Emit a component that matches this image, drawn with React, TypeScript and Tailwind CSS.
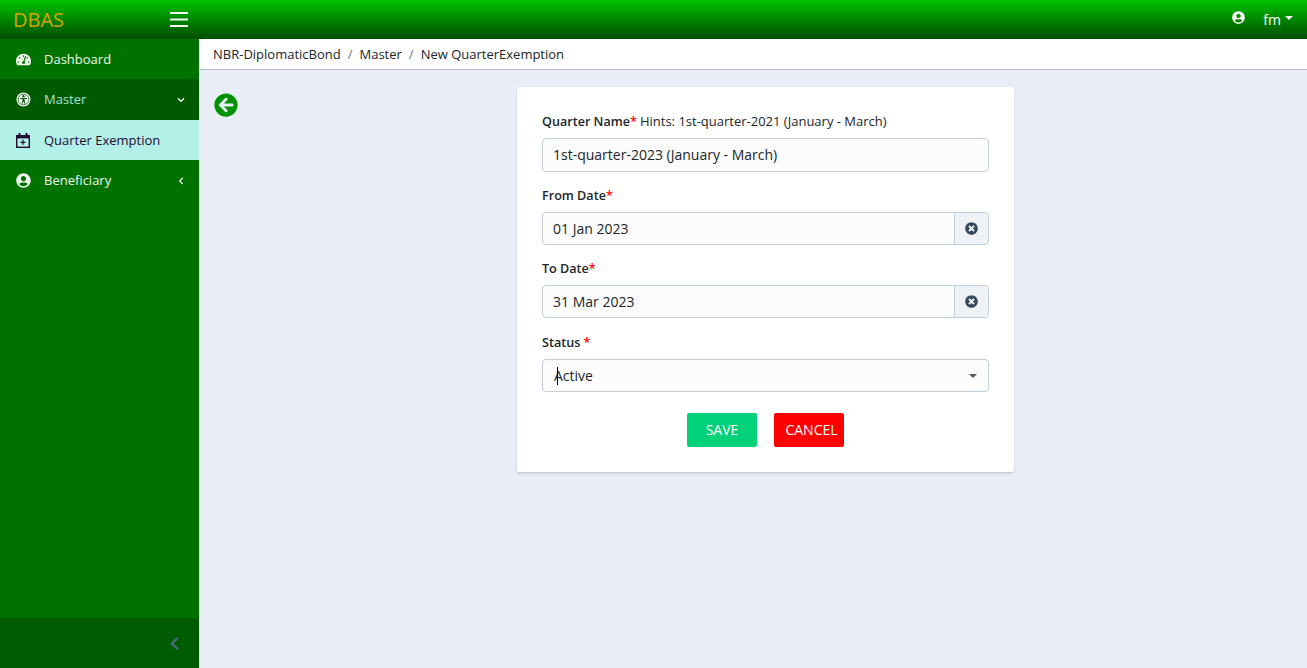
import { FaTachometerAlt, FaUserCircle, FaArrowCircleLeft, FaTimesCircle, FaChevronDown, FaChevronLeft } from "react-icons/fa";
import { ReactNode } from "react";

const font = { fontFamily: '"Open Sans", sans-serif' };

function AccessIcon() {
  return (
    <svg width="15" height="15" viewBox="0 0 15 15">
      <circle cx="7.5" cy="7.5" r="7" fill="#fff" />
      <circle cx="7.5" cy="7.5" r="5.4" fill="none" stroke="#005a00" strokeWidth="0.8" />
      <circle cx="7.5" cy="4.3" r="1.2" fill="#005a00" />
      <path d="M3.9 5.9h7.2v1.1H8.6v1.8l1 3h-1.1l-1-2.6-1 2.6H5.400l1-3V7H3.900z" fill="#005a00" />
    </svg>
  );
}

function CalendarIcon() {
  return (
    <svg width="14" height="15" viewBox="0 0 14 15">
      <rect x="0.7" y="2.700" width="12.600" height="11.600" fill="none" stroke="#220a33" strokeWidth="1.400" />
      <rect x="0" y="2" width="14" height="3.400" fill="#220a33" />
      <rect x="2.500" y="0" width="2" height="3" fill="#220a33" />
      <rect x="9.500" y="0" width="2" height="3" fill="#220a33" />
      <path d="M6.400 6.800h1.200v1.900h1.900v1.200H7.600v1.900H6.400V9.900H4.500V8.700h1.900z" fill="#220a33" />
    </svg>
  );
}

function NavItem({ icon, label, tone, arrow, h = "h-10 pt-px" }: { icon: ReactNode; label: string; tone: string; arrow?: ReactNode; h?: string }) {
  return (
    <div className={`flex items-center pl-4 pr-[14px] text-[13px] ${h} ${tone}`}>
      <span className="w-[28px] text-[15px] flex items-center">{icon}</span>
      <span className="flex-1">{label}</span>
      {arrow}
    </div>
  );
}

function DateField({ label, value, mb }: { label: string; value: string; mb: string }) {
  return (
    <div className={mb}>
      <label className="block text-[12.6px] font-semibold leading-[18px] mb-[7px] text-[#212529]">
        {label}
        <span className="text-[#ff0000]">*</span>
      </label>
      <div className="flex h-[33px] border border-[#bfcfdb] rounded-[4px] bg-[#fcfcfc] text-[#212529]">
        <div className="flex-1 px-[10px] text-[14px] leading-[31px]">{value}</div>
        <div className="w-[34px] bg-[#eff2f5] border-l border-[#bfcfdb] rounded-r-[4px] flex items-center justify-center text-[#36495c] text-[13px]">
          <FaTimesCircle />
        </div>
      </div>
    </div>
  );
}

export default function App() {
  return (
    <div className="h-[668px] w-full flex flex-col overflow-hidden bg-[#e9eef6]" style={font}>
      <header className="h-[39px] shrink-0 flex items-center bg-gradient-to-b from-[#00c300] to-[#004f00]">
        <div className="w-[199px] flex items-center justify-between pl-[13px] pr-[11px]">
          <span className="text-[#d9a300] text-[20px] leading-[28px] mt-[1px]">DBAS</span>
          <svg width="18" height="15" viewBox="0 0 18 15" className="mt-[-1px]">
            <rect y="0" width="18" height="2" fill="#f2f8f2" />
            <rect y="6.5" width="18" height="2" fill="#f2f8f2" />
            <rect y="13" width="18" height="2" fill="#f2f8f2" />
          </svg>
        </div>
        <div className="flex-1 flex items-center justify-end pr-[14px] text-white">
          <FaUserCircle className="text-[13px] mr-[18px] mt-[-5px]" />
          <span className="text-[14px]">fm</span>
          <span className="ml-[4px] mb-[3px] border-t-[4px] border-x-[4px] border-t-white border-x-transparent" />
        </div>
      </header>
      <div className="flex flex-1 min-h-0">
        <aside className="w-[199px] shrink-0 flex flex-col bg-[#007200]">
          <NavItem icon={<FaTachometerAlt />} label="Dashboard" tone="text-[#eef8ee]" />
          <NavItem
            icon={<AccessIcon />}
            label="Master"
            tone="bg-[#005a00] text-[#a6e0d8]"
            h="h-[41px]"
            arrow={<FaChevronDown className="text-[8px] text-white" />}
          />
          <NavItem icon={<CalendarIcon />} label="Quarter Exemption" tone="bg-[#b2f0e8] text-[#220a33]" />
          <NavItem
            icon={<FaUserCircle />}
            label="Beneficiary"
            tone="text-[#eef8ee]"
            arrow={<FaChevronLeft className="text-[8px] text-white" />}
          />
          <div className="mt-auto h-[50px] bg-[#005c00] flex items-center justify-end pr-[17px] text-[#46677c] text-[15px]">
            <FaChevronLeft />
          </div>
        </aside>
        <main className="flex-1 min-w-0 flex flex-col">
          <nav className="h-[31px] shrink-0 bg-white border-b border-[#b4bcc4] flex items-center px-[14px] pt-[2px] text-[13px] text-[#212529]">
            <span>NBR-DiplomaticBond</span>
            <span className="mx-[7px] text-[#6c757d]">/</span>
            <span>Master</span>
            <span className="mx-[7px] text-[#6c757d]">/</span>
            <span>New QuarterExemption</span>
          </nav>
          <div className="flex items-start pl-[15px] pt-[17px]">
            <FaArrowCircleLeft className="text-[24px] text-[#009000] mt-[6px] shrink-0" />
            <section className="ml-[279px] w-[497px] h-[386px] bg-white rounded-[3px] border-b border-[#c9ced4] shadow-sm px-[25px] pt-[25px]">
              <div className="mb-[7px] text-[13px] leading-[18px] text-[#212529]">
                <span className="text-[12.6px] font-semibold">Quarter Name</span>
                <span className="text-[12.6px] font-semibold text-[#ff0000]">*</span>
                <span className="ml-[3px]">Hints: 1st-quarter-2021 (January - March)</span>
              </div>
              <div className="h-[34px] mb-[15px] border border-[#bfcfdb] rounded-[4px] bg-[#fcfcfc] px-[10px] text-[14px] leading-[32px] text-[#212529]">
                1st-quarter-2023 (January - March)
              </div>
              <DateField label="From Date" value="01 Jan 2023" mb="mb-[15px]" />
              <DateField label="To Date" value="31 Mar 2023" mb="mb-[16px]" />
              <label className="block text-[12.6px] font-semibold leading-[18px] mb-[7px] text-[#212529]">
                Status <span className="text-[#ff0000]">*</span>
              </label>
              <div className="relative h-[33px] border border-[#bfcfdb] rounded-[4px] bg-[#fcfcfc] pl-[11px] pr-[12px] flex items-center justify-between text-[14px] text-[#212529]">
                <span>Active</span>
                <span className="border-t-[4px] border-x-[4px] border-t-[#555] border-x-transparent mr-[-1px]" />
                <span className="absolute left-[14px] top-[7px] h-[18px] w-px bg-black" />
              </div>
              <div className="flex justify-center gap-[17px] mt-[21px]">
                <button className="w-[70px] h-[34px] bg-[#00d27a] text-white text-[14px] rounded-[2px] pb-[2px]">SAVE</button>
                <button className="w-[70px] h-[34px] bg-[#ff0000] text-white text-[14px] rounded-[2px] pl-[5px] pb-[2px]">CANCEL</button>
              </div>
            </section>
          </div>
        </main>
      </div>
    </div>
  );
}
